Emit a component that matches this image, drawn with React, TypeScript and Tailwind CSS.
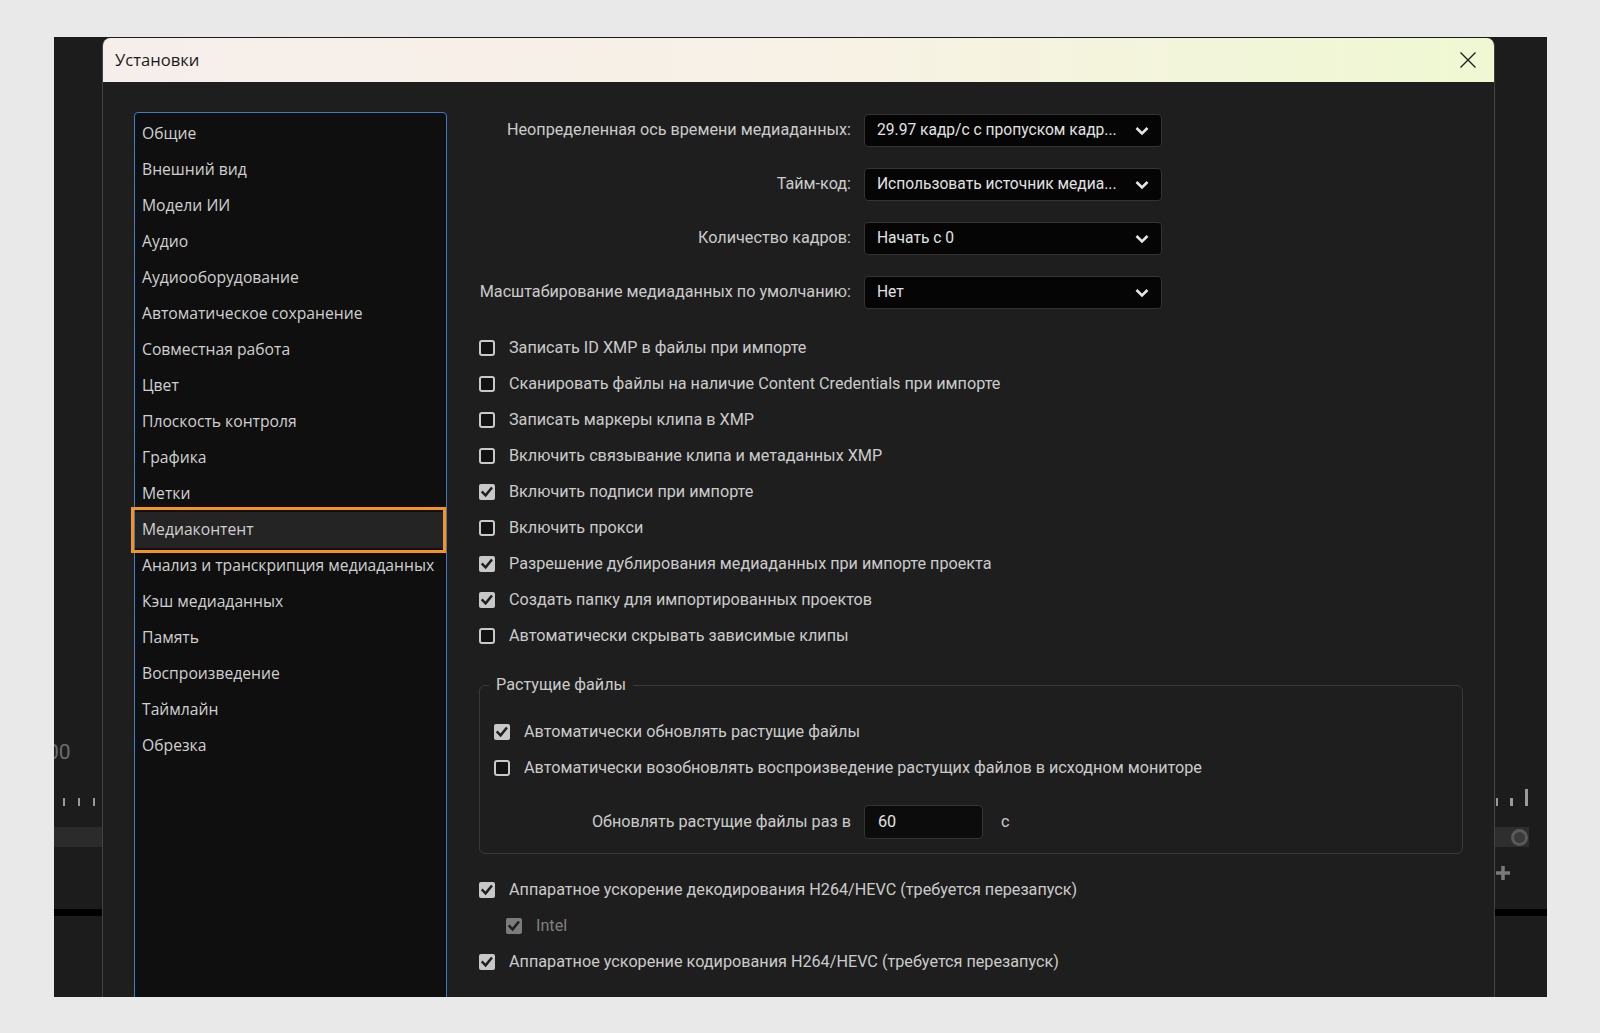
import React from "react";

const listItems = [
  "Общие",
  "Внешний вид",
  "Модели ИИ",
  "Аудио",
  "Аудиооборудование",
  "Автоматическое сохранение",
  "Совместная работа",
  "Цвет",
  "Плоскость контроля",
  "Графика",
  "Метки",
  "Медиаконтент",
  "Анализ и транскрипция медиаданных",
  "Кэш медиаданных",
  "Память",
  "Воспроизведение",
  "Таймлайн",
  "Обрезка",
];

const dropdowns = [
  ["Неопределенная ось времени медиаданных:", "29.97 кадр/с с пропуском кадр..."],
  ["Тайм-код:", "Использовать источник медиа..."],
  ["Количество кадров:", "Начать с 0"],
  ["Масштабирование медиаданных по умолчанию:", "Нет"],
];

const checks: [string, boolean][] = [
  ["Записать ID XMP в файлы при импорте", false],
  ["Сканировать файлы на наличие Content Credentials при импорте", false],
  ["Записать маркеры клипа в XMP", false],
  ["Включить связывание клипа и метаданных XMP", false],
  ["Включить подписи при импорте", true],
  ["Включить прокси", false],
  ["Разрешение дублирования медиаданных при импорте проекта", true],
  ["Создать папку для импортированных проектов", true],
  ["Автоматически скрывать зависимые клипы", false],
];

function Box({ checked, dim }: { checked: boolean; dim?: boolean }) {
  if (checked) {
    return (
      <div
        className={`w-[16px] h-[16px] rounded-[2px] flex items-center justify-center shrink-0 ${
          dim ? "bg-[#7c7c7c]" : "bg-[#c8c8c8]"
        }`}
      >
        <svg width="16" height="16" viewBox="0 0 16 16">
          <path d="M3.6 8.3 L6.6 11.4 L12.2 4.4" fill="none" stroke="#1e1e1e" strokeWidth="2.5" strokeLinecap="square" />
        </svg>
      </div>
    );
  }
  return <div className="w-[16px] h-[16px] rounded-[3px] border-[2px] border-[#c8c8c8] bg-[#121212] shrink-0" />;
}

function CheckRow({ label, checked, dim }: { label: string; checked: boolean; dim?: boolean }) {
  return (
    <div className="h-[36px] flex items-center gap-[14px]">
      <Box checked={checked} dim={dim} />
      <span className={dim ? "text-[#808080]" : "text-[#cbcbcb]"}>{label}</span>
    </div>
  );
}

function Chevron() {
  return (
    <svg width="14" height="10" viewBox="0 0 14 10">
      <path d="M1.5 2 L7 7.5 L12.5 2" fill="none" stroke="#e6e6e6" strokeWidth="2.6" />
    </svg>
  );
}

function LeftStrip() {
  return (
    <div className="w-[48px] shrink-0 flex flex-col overflow-hidden bg-[#1c1c1c]">
      <div className="h-[703px]" />
      <div className="h-[24px] leading-[24px] text-[21px] text-[#6c6c6c] -ml-[7px] whitespace-nowrap" style={{ fontFamily: "Roboto, sans-serif" }}>
        00
      </div>
      <div className="mt-[34px] h-[8px] flex gap-[13px] pl-[9px]">
        <div className="w-[2px] h-full bg-[#9a9a9a]" />
        <div className="w-[2px] h-full bg-[#9a9a9a]" />
        <div className="w-[2px] h-full bg-[#9a9a9a]" />
      </div>
      <div className="mt-[21px] h-[20px] bg-[#2b2b2b]" />
      <div className="mt-[62px] h-[7px] bg-black" />
    </div>
  );
}

function RightStrip() {
  return (
    <div className="w-[52px] shrink-0 flex flex-col overflow-hidden bg-[#1c1c1c]">
      <div className="h-[752px]" />
      <div className="h-[17px] flex items-end gap-[12px] pl-[1px]">
        <div className="w-[2px] h-[8px] bg-[#9a9a9a]" />
        <div className="w-[3px] h-[8px] bg-[#9a9a9a]" />
        <div className="w-[3px] h-[17px] bg-[#9a9a9a]" />
      </div>
      <div className="mt-[21px] h-[20px] w-[34px] bg-[#2e2e2e] flex items-center justify-end pr-[1px]">
        <div className="w-[17px] h-[17px] rounded-full border-[3px] border-[#5a5a5a] bg-[#3a3a3a]" />
      </div>
      <div className="mt-[19px] h-[14px] pl-[1px] flex">
        <svg width="14" height="14" viewBox="0 0 14 14">
          <path d="M7 0 V14 M0 7 H14" stroke="#7a7a7a" strokeWidth="3.5" />
        </svg>
      </div>
      <div className="mt-[29px] h-[7px] bg-black" />
    </div>
  );
}

export default function App() {
  return (
    <div className="min-h-screen w-full bg-[#e9e9e9] pt-[37px] pl-[54px]">
      <div className="flex h-[960px] w-[1493px] bg-[#1c1c1c] overflow-hidden">
        <LeftStrip />
        <div className="w-[1393px] shrink-0 mt-[1px] flex flex-col rounded-t-[8px] overflow-hidden border-x border-[#444444]">
          <div
            className="h-[44px] shrink-0 flex items-center justify-between pl-[12px] pr-[17px] bg-gradient-to-r from-[#f6eeeb] via-[#f8f1e6] to-[#eff8d2]"
            style={{ fontFamily: "'Open Sans', sans-serif" }}
          >
            <span className="text-[16.6px] text-[#1a1a1a]">Установки</span>
            <svg width="18" height="18" viewBox="0 0 18 18">
              <path d="M1.5 1.5 L16.5 16.5 M16.5 1.5 L1.5 16.5" stroke="#202020" strokeWidth="1.4" />
            </svg>
          </div>
          <div className="flex-1 bg-[#1e1e1e] flex pl-[31px] pt-[30px] overflow-hidden">
            <div
              className="w-[313px] h-[960px] shrink-0 rounded-[4px] border-[1.5px] border-[#3b7bc8] bg-[#0f0f0f] pt-[3px]"
              style={{ fontFamily: "'Open Sans', sans-serif" }}
            >
              {listItems.map((it) => {
                const sel = it === "Медиаконтент";
                return (
                  <div
                    key={it}
                    className={`relative h-[36px] flex items-center pl-[7px] text-[15.7px] text-[#d0d0d0] ${sel ? "bg-[#242424]" : ""}`}
                  >
                    {sel && <div className="absolute -left-[4px] right-[0px] -top-[5px] -bottom-[5px] border-[3.5px] border-[#f7941d]" />}
                    <span className="relative">{it}</span>
                  </div>
                );
              })}
            </div>
            <div className="ml-[32px] flex flex-col text-[16.2px] text-[#cbcbcb]" style={{ fontFamily: "Roboto, sans-serif" }}>
              <div className="flex flex-col gap-[21px] pt-[2px]">
                {dropdowns.map(([l, v]) => (
                  <div key={l} className="flex items-center">
                    <div className="w-[372px] text-right whitespace-nowrap">{l}</div>
                    <div className="ml-[13px] w-[298px] h-[33px] rounded-[4px] border border-[#343434] bg-[#050505] flex items-center justify-between pl-[12px] pr-[12px] text-[#e2e2e2]">
                      <span className="whitespace-nowrap text-[15.6px]">{v}</span>
                      <Chevron />
                    </div>
                  </div>
                ))}
              </div>
              <div className="mt-[21px] flex flex-col">
                {checks.map(([l, c]) => (
                  <CheckRow key={l} label={l} checked={c} />
                ))}
              </div>
              <fieldset className="mt-[20px] w-[984px] rounded-[6px] border border-[#3a3a3a] px-[14px] pb-[14px]">
                <legend className="-ml-[5px] px-[7px] leading-[22px] text-[#cbcbcb]">Растущие файлы</legend>
                <div className="pt-[18px] flex flex-col">
                  <CheckRow label="Автоматически обновлять растущие файлы" checked={true} />
                  <CheckRow label="Автоматически возобновлять воспроизведение растущих файлов в исходном мониторе" checked={false} />
                </div>
                <div className="mt-[19px] flex items-center">
                  <div className="w-[357px] text-right whitespace-nowrap">Обновлять растущие файлы раз в</div>
                  <div className="ml-[13px] w-[119px] h-[34px] rounded-[4px] border border-[#343434] bg-[#0c0c0c] flex items-center pl-[13px] text-[#e2e2e2]">
                    60
                  </div>
                  <div className="ml-[18px]">с</div>
                </div>
              </fieldset>
              <div className="mt-[18px] flex flex-col">
                <CheckRow label="Аппаратное ускорение декодирования H264/HEVC (требуется перезапуск)" checked={true} />
                <div className="pl-[27px]">
                  <CheckRow label="Intel" checked={true} dim />
                </div>
                <CheckRow label="Аппаратное ускорение кодирования H264/HEVC (требуется перезапуск)" checked={true} />
              </div>
            </div>
          </div>
        </div>
        <RightStrip />
      </div>
    </div>
  );
}
